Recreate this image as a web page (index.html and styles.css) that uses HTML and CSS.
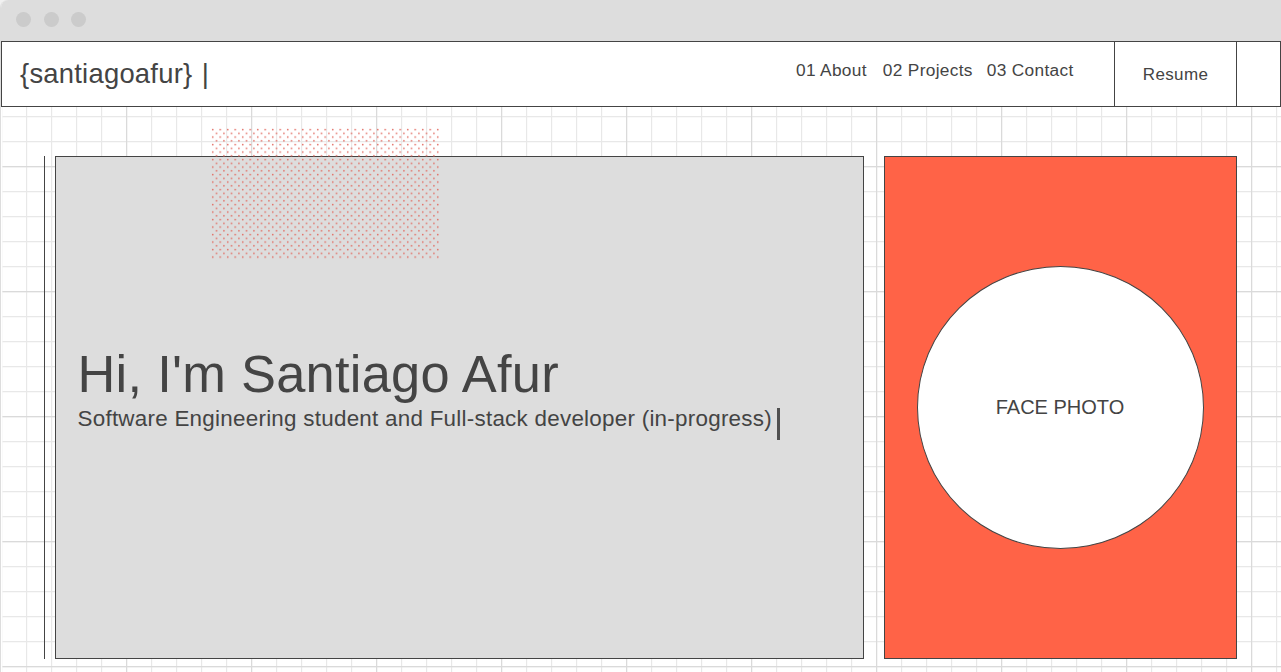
FILE: index.html
```html
<!DOCTYPE html>
<html lang="en">
<head>
<meta charset="utf-8">
<title>santiagoafur</title>
<link rel="stylesheet" href="styles.css">
</head>
<body>
<div class="browser">
  <div class="chrome"><span class="light"></span><span class="light"></span><span class="light"></span></div>
  <header class="navbar">
    <div class="logo">{santiagoafur} <span class="logo-caret">|</span></div>
    <nav class="links"><a class="about">01 About</a><a class="projects">02 Projects</a><a>03 Contact</a></nav>
    <a class="resume">Resume</a>
  </header>
  <main class="canvas">
    <svg class="grid" width="1280" height="566" aria-hidden="true">
      <defs>
        <pattern id="minor" x="0" y="9" width="25" height="25" patternUnits="userSpaceOnUse"><path d="M.6 0V25M0 .6H25" fill="none" stroke="#e8e8e8" stroke-width="1.2"/></pattern>
        <pattern id="major" x="0" y="59" width="125" height="125" patternUnits="userSpaceOnUse"><path d="M.6 0V125M0 .6H125" fill="none" stroke="#dadada" stroke-width="1.2"/></pattern>
      </defs>
      <rect x="1.5" width="1280" height="566" fill="url(#minor)"/>
      <rect x="1.5" width="1280" height="566" fill="url(#major)"/>
    </svg>
    <div class="rule"></div>
    <section class="hero">
      <svg class="dots" width="229" height="131" aria-hidden="true">
        <defs><pattern id="dot" width="7.5" height="7.5" patternUnits="userSpaceOnUse"><circle cx="1.7" cy="1.6" r=".82" fill="#e2695f"/><circle cx="5.45" cy="5.35" r=".82" fill="#e2695f"/></pattern></defs>
        <rect width="229" height="131" fill="url(#dot)"/>
      </svg>
      <h1 class="title">Hi, I'm Santiago Afur</h1>
      <p class="subtitle">Software Engineering student and Full-stack developer (in-progress)<span class="caret"></span></p>
    </section>
    <aside class="photo-card"><div class="photo">FACE PHOTO</div></aside>
  </main>
</div>
</body>
</html>
```
FILE: styles.css
```css
* { box-sizing: border-box; }
body {
  margin: 0;
  background: #f1f1f1;
  color: #444;
  font-family: "Liberation Sans", Arial, sans-serif;
}
.browser {
  width: 1281px;
  height: 672px;
  overflow: hidden;
  border-left: 1px solid #ddd;
  border-radius: 8px 0 0 0;
  background: #fff;
}
.chrome {
  height: 41px;
  padding: 12px 0 0 15px;
  display: flex;
  gap: 12.5px;
  background: #ddd;
}
.light {
  width: 15px;
  height: 15px;
  border-radius: 50%;
  background: #cbcbcb;
}
.navbar {
  height: 66px;
  display: flex;
  border: 1px solid #444;
  background: #fff;
}
.logo {
  flex: 1;
  padding: 16px 0 0 18px;
  font-size: 27.4px;
  line-height: 31px;
  letter-spacing: .24px;
}
.logo-caret { margin-left: 1.5px; }
.links {
  display: flex;
  width: 318px;
  padding-top: 18px;
  font-size: 17.3px;
  line-height: 21px;
  letter-spacing: .32px;
}
.about { margin-right: 16px; }
.projects { margin-right: 14px; }
.resume {
  width: 123px;
  margin-right: 43px;
  border: solid #444;
  border-width: 0 1px;
  font-size: 17px;
  line-height: 66px;
  letter-spacing: .35px;
  text-align: center;
}
.canvas {
  position: relative;
  height: 565px;
  padding: 49px 0 0 43px;
  display: flex;
}
.grid {
  position: absolute;
  left: 0;
  top: 0;
}
.rule {
  position: relative;
  width: 1px;
  height: 503px;
  margin-right: 10px;
  background: #444;
}
.hero {
  position: relative;
  width: 809px;
  height: 503px;
  margin-right: 20px;
  padding: 187px 0 0 21.5px;
  border: 1px solid #444;
  background: #ddd;
}
.dots {
  position: absolute;
  left: 155px;
  top: -29px;
}
.title {
  margin: 0;
  font-size: 52.4px;
  font-weight: 400;
  line-height: 60px;
  letter-spacing: .26px;
}
.subtitle {
  display: flex;
  margin: 2px 0 0;
  font-size: 22.4px;
  line-height: 26px;
  letter-spacing: .26px;
  white-space: nowrap;
}
.caret {
  width: 3px;
  height: 32px;
  margin: 2px 0 0 5px;
  background: #505050;
}
.photo-card {
  position: relative;
  width: 353px;
  height: 503px;
  padding: 109px 0 0 32px;
  border: 1px solid #444;
  background: #ff6347;
}
.photo {
  width: 287px;
  height: 283px;
  padding-right: 1px;
  display: grid;
  place-items: center;
  border: 1px solid #444;
  border-radius: 50%;
  background: #fff;
  font-size: 20px;
}
```
